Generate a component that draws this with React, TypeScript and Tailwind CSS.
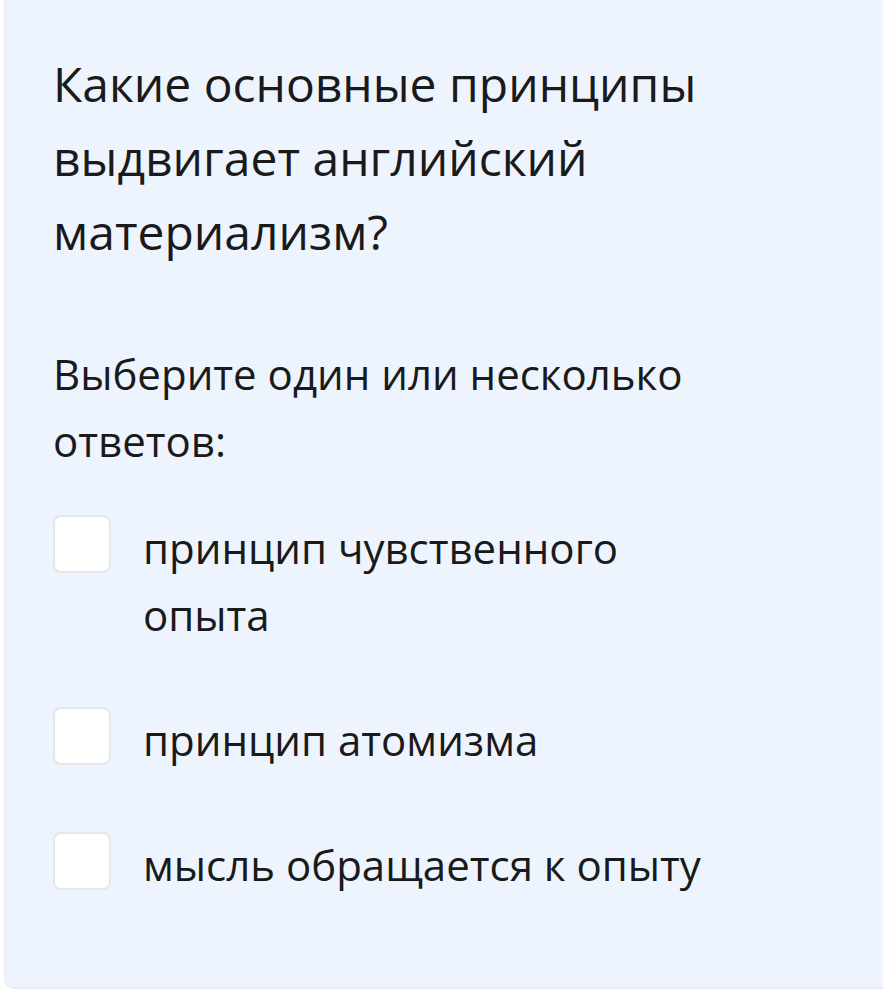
const options = [
  'принцип чувственного опыта',
  'принцип атомизма',
  'мысль обращается к опыту',
];

export default function App() {
  return (
    <div className="min-h-[997px] bg-white pl-[4px]" style={{ fontFamily: '"Open Sans", sans-serif' }}>
      <div className="rounded-bl-[10px] border-b-2 border-l border-[#e6ecf4] bg-[#eef4fe] pb-[89px] pl-[48px] pr-[50px] pt-[47px] text-[#1a1a1a]">
        <h1 className="text-[48px] leading-[74px] font-normal">
          Какие основные принципы выдвигает английский материализм?
        </h1>

        <p className="mt-[71px] text-[42px] leading-[67px]">
          Выберите один или несколько ответов:
        </p>

        <div className="mt-[40px] flex flex-col gap-[58px]">
          {options.map((opt) => (
            <label key={opt} className="flex items-start">
              <span className="mt-[1px] h-[58px] w-[58px] shrink-0 rounded-[8px] border-2 border-[#e4e8ed] bg-white" />
              <span className="ml-[32px] w-[590px] text-[42px] leading-[67px]">{opt}</span>
            </label>
          ))}
        </div>
      </div>
    </div>
  );
}
